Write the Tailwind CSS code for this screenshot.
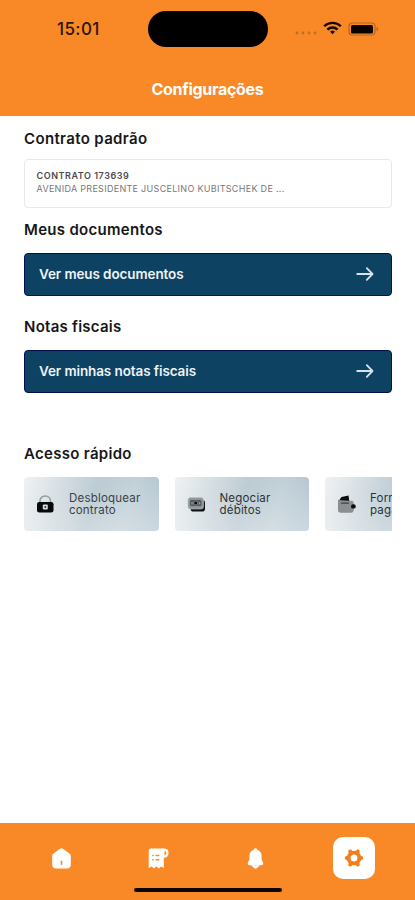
<!DOCTYPE html>
<html lang="pt-BR">
<head>
  <meta charset="UTF-8">
  <meta name="viewport" content="width=device-width, initial-scale=1">
  <title>Configurações</title>
  <script src="https://cdn.jsdelivr.net/npm/@tailwindcss/browser@4"></script>
</head>
<body class="bg-white font-['Inter','Liberation_Sans',sans-serif] text-[#171719]">
  <div class="flex flex-col h-[900px] w-[415px] overflow-hidden">

    <!-- Header -->
    <header class="h-[116px] shrink-0 bg-[#f98826]">
      <div class="grid grid-cols-[148px_120px_147px] items-center pt-[11px]">
        <span class="pl-[57px] text-[17px] leading-9 font-medium tracking-[0.4px] text-[#2b1606]">15:01</span>
        <div class="h-9 rounded-full bg-black"></div>
        <div class="flex items-center pl-[27px]">
          <svg class="mt-2 w-[22px] h-1" viewBox="0 0 22 4" fill="#c46d22">
            <circle cx="2" cy="2" r="1.4"/><circle cx="8" cy="2" r="1.4"/><circle cx="14" cy="2" r="1.4"/><circle cx="20" cy="2" r="1.4"/>
          </svg>
          <svg class="ml-[6px] -mt-[2px] w-[19px] h-[14px]" viewBox="0 0 19 14" fill="none" stroke="#150a02" stroke-width="2.3">
            <path d="M1.2 5.2a11.8 11.8 0 0 1 16.6 0"/>
            <path d="M4.4 8.6a7.2 7.2 0 0 1 10.2 0"/>
            <path d="M9.5 13.2 7 10.8a3.6 3.6 0 0 1 5 0z" fill="#150a02" stroke="none"/>
          </svg>
          <svg class="ml-[6px] -mt-[1px] w-[32px] h-[14px]" viewBox="0 0 32 14">
            <rect x="1" y="1" width="26" height="12" rx="3.5" fill="none" stroke="#b9651d" stroke-width="1.2"/>
            <rect x="3" y="3" width="22" height="8.5" rx="1.5" fill="#090401"/>
            <path d="M28.5 5v4c1.1-.4 1.7-1.1 1.7-2s-.6-1.6-1.7-2z" fill="#b9651d"/>
          </svg>
        </div>
      </div>
      <h1 class="mt-[30px] text-center text-[16px] leading-6 font-bold tracking-[-0.3px] text-white">Configurações</h1>
    </header>

    <!-- Content -->
    <main class="flex-1 pl-6 pr-[23px] pt-[13px]">
      <h2 class="text-[15px] leading-5 font-semibold tracking-[0.35px]">Contrato padrão</h2>
      <div class="mt-[10px] h-[49px] rounded border border-[#e9e9eb] pl-[11.5px] pt-[9px]">
        <p class="text-[9px] leading-[13px] font-semibold tracking-[0.55px] text-[#4b4b4d]">CONTRATO 173639</p>
        <p class="text-[9px] leading-[14px] tracking-[0.3px] text-[#77777a]">AVENIDA PRESIDENTE JUSCELINO KUBITSCHEK DE ...</p>
      </div>

      <h2 class="mt-[12px] text-[15px] leading-5 font-semibold tracking-[0.3px]">Meus documentos</h2>
      <a class="mt-[13px] flex h-[43px] items-center justify-between rounded border border-[#04104a] bg-[#0d4263] pl-[14px] pr-[17px] pb-px text-[13.5px] font-semibold tracking-[-0.1px] text-[#eef3f7]">
        <span>Ver meus documentos</span>
        <svg class="w-[18px] h-4" viewBox="0 0 18 16" fill="none" stroke="#d9e2e8" stroke-width="1.8" stroke-linecap="round" stroke-linejoin="round">
          <path d="M1.2 8h15M10.800 2.200 16.500 8 10.800 13.800"/>
        </svg>
      </a>

      <h2 class="mt-[21px] text-[15px] leading-5 font-semibold tracking-[0.25px]">Notas fiscais</h2>
      <a class="mt-[13px] flex h-[43px] items-center justify-between rounded border border-[#04104a] bg-[#0d4263] pl-[14px] pr-[17px] pb-px text-[13.5px] font-semibold tracking-[-0.1px] text-[#eef3f7]">
        <span>Ver minhas notas fiscais</span>
        <svg class="w-[18px] h-4" viewBox="0 0 18 16" fill="none" stroke="#d9e2e8" stroke-width="1.8" stroke-linecap="round" stroke-linejoin="round">
          <path d="M1.2 8h15M10.800 2.200 16.500 8 10.800 13.800"/>
        </svg>
      </a>

      <h2 class="mt-[51px] text-[15px] leading-5 font-semibold tracking-[0.3px]">Acesso rápido</h2>
      <div class="mt-[13px] flex gap-4 overflow-hidden">
        <div class="flex h-[54px] w-[134.5px] shrink-0 items-center rounded bg-[linear-gradient(170deg,transparent_30%,rgba(255,255,255,0.35)_100%),linear-gradient(105deg,#f0f2f3_0%,#dce3e7_20%,#bdccd4_50%,#c2d0d8_75%,#afc3ce_100%)] pl-[12px]">
          <svg class="w-[19px] h-[18px] shrink-0" viewBox="0 0 19 18">
            <path d="M4 8V5.500a5.200 4.500 0 0 1 10.400 0v2.500" fill="none" stroke="#929b9f" stroke-width="1.500"/>
            <rect x="1" y="7" width="16.500" height="10.500" rx="2.200" fill="#08090a"/>
            <rect x="6.800" y="9.600" width="5" height="5" rx="1" fill="#d5dde1"/>
            <circle cx="9.300" cy="12.100" r="1" fill="#33383a"/>
          </svg>
          <p class="ml-[14px] text-[11.5px] leading-3 tracking-[0.2px] text-[#3a4348]">Desbloquear<br>contrato</p>
        </div>
        <div class="flex h-[54px] w-[134.5px] shrink-0 items-center rounded bg-[linear-gradient(170deg,transparent_30%,rgba(255,255,255,0.35)_100%),linear-gradient(105deg,#f0f2f3_0%,#dce3e7_20%,#bdccd4_50%,#c2d0d8_75%,#afc3ce_100%)] pl-[12px]">
          <svg class="w-[19px] h-[18px] shrink-0" viewBox="0 0 19 18">
            <rect x="3.500" y="5" width="14.500" height="11.500" rx="2.800" fill="#111314"/>
            <rect x="1" y="2.500" width="15.500" height="11.500" rx="2.500" fill="#8f9699" stroke="#bfc8cc" stroke-width=".6"/>
            <rect x="3" y="5" width="11.500" height="6" rx="1.500" fill="#54595b"/>
            <circle cx="8.800" cy="8" r="2" fill="#08090a" stroke="#949ea2" stroke-width=".8"/>
            <path d="M5 7v2.500M12.700 7v2.500" stroke="#a4adb1"/>
          </svg>
          <p class="ml-[14px] text-[11.5px] leading-3 tracking-[0.2px] text-[#2b3338]">Negociar<br>débitos</p>
        </div>
        <div class="flex h-[54px] w-[134.5px] shrink-0 items-center rounded bg-[linear-gradient(170deg,transparent_30%,rgba(255,255,255,0.35)_100%),linear-gradient(105deg,#f0f2f3_0%,#dce3e7_20%,#bdccd4_50%,#c2d0d8_75%,#afc3ce_100%)] pl-[12px]">
          <svg class="w-[20px] h-[20px] shrink-0" viewBox="0 0 20 20">
            <path d="M2 6.500 4.500 3l7-1.500.8 5.500z" fill="#0b0c0d"/>
            <path d="M1 5.500c1 1 2 1.300 4 1.300h9.500a2.200 2.200 0 0 1 2.200 2.200v7a2.800 2.800 0 0 1-2.800 2.800H3.800A2.800 2.800 0 0 1 1 16z" fill="#8b8f91"/>
            <path d="M4.500 9.200h7" stroke="#3e4244" stroke-width="1.200" stroke-linecap="round"/>
            <rect x="14" y="10.200" width="4.800" height="4.400" rx="2.200" fill="#08090a"/>
          </svg>
          <p class="ml-[13px] whitespace-nowrap text-[11.5px] leading-3 tracking-[0.2px] text-[#2b3338]">Formas de<br>pagamento</p>
        </div>
      </div>
    </main>

    <!-- Bottom navigation -->
    <nav class="relative h-[77px] shrink-0 bg-[#f98826]">
      <div class="flex items-center justify-between px-[40px] pt-[14px]">
        <div class="flex h-[42px] w-[42px] items-center justify-center">
          <svg class="w-[21px] h-[21px]" viewBox="0 0 21 21">
            <path d="M8.700 1a3 3 0 0 1 3.600 0l6.200 4.600a3.200 3.200 0 0 1 1.300 2.600v8.300a4 4 0 0 1-4 4H5.200a4 4 0 0 1-4-4V8.200a3.200 3.200 0 0 1 1.300-2.600z" fill="#fff"/>
            <path d="M10.500 13.300v3" stroke="#f98826" stroke-width="1.600" stroke-linecap="round"/>
          </svg>
        </div>
        <div class="flex h-[42px] w-[42px] items-center justify-center">
          <svg class="w-[21px] h-[21px]" viewBox="0 0 21 21">
            <path d="M3 .500h13.500a4.300 4.300 0 0 1 4 4.500c0 3-1.500 4.800-4.700 4.800V20l-2.600-1.500-2.400 1.900-2.400-1.900-2.400 1.900-2.400-1.900L.700 20V3.300C.700 1.500 1.600.500 3 .500z" fill="#fff"/>
            <path d="M16.500 7.500V4.300c0-1.400 1.600-1.400 1.600 0 0 1.700-.4 3-1.600 3.200z" fill="#f98826"/>
            <path d="M4.800 7.500h.4M8.200 7.500h2.600M4.800 11.800h.4M8.200 11.800h2.600" stroke="#f98826" stroke-width="1.400" stroke-linecap="round"/>
          </svg>
        </div>
        <div class="flex h-[42px] w-[42px] items-center justify-center pr-px">
          <svg class="w-[17px] h-[21px]" viewBox="0 0 17 21" fill="#fff">
            <path d="M8.500.300c1 0 1.700.7 1.800 1.500 2.600.9 4.300 3.100 4.300 6v3.400c0 1.300 1.700 2.600 1.700 4.300 0 1.200-.8 1.800-2 1.800H2.700c-1.200 0-2-.6-2-1.800 0-1.700 1.700-3 1.700-4.300V7.800c0-2.900 1.700-5.100 4.300-6C6.800 1 7.500.300 8.500.300z"/>
            <path d="M4 17.200h9L10 20.100a2.200 2.200 0 0 1-3 0z"/>
          </svg>
        </div>
        <div class="flex h-[42px] w-[42px] items-center justify-center rounded-[10px] bg-white">
          <svg class="w-[20px] h-[20px]" viewBox="0 0 20 20">
            <circle cx="10" cy="10" r="5.400" fill="none" stroke="#f27e1c" stroke-width="3.800"/>
            <path d="M15.500 10h1.800M12.750 14.760l1 1.730M7.250 14.760l-1 1.730M4.500 10h-1.800M7.250 5.240l-1-1.730M12.750 5.240l1-1.730" stroke="#f27e1c" stroke-width="4" stroke-linecap="round"/>
          </svg>
        </div>
      </div>
      <div class="absolute bottom-2 left-[134px] h-1 w-[148px] rounded-full bg-[#0d0502]"></div>
    </nav>
  </div>
</body>
</html>
